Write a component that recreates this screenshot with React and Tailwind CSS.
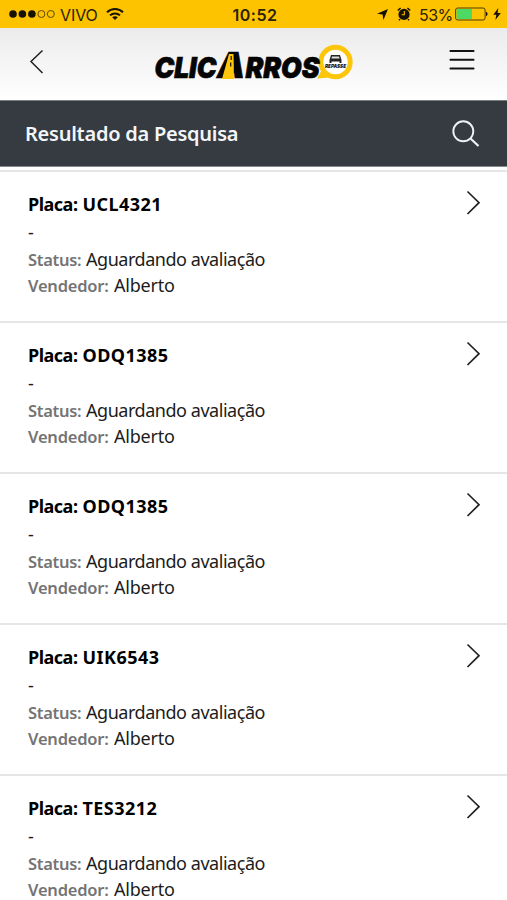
import React from 'react';

const vehicles = ['UCL4321', 'ODQ1385', 'ODQ1385', 'UIK6543', 'TES3212'];

function StatusBar() {
  return (
    <div className="flex h-7 shrink-0 items-center bg-[#fdc300] pr-[6px] pl-[9px] font-['Inter','Liberation_Sans',sans-serif] text-[#2b2205]">
      <div className="flex flex-1 items-center">
        <svg width="48" height="10" viewBox="0 0 48 10">
          <g fill="#171100">
            <circle cx="4" cy="5" r="3.8" />
            <circle cx="13.4" cy="5" r="3.8" />
            <circle cx="22.9" cy="5" r="3.8" />
          </g>
          <g fill="none" stroke="#4d3c04" strokeWidth="0.9">
            <circle cx="32.4" cy="5" r="3.5" />
            <circle cx="41.8" cy="5" r="3.5" />
          </g>
        </svg>
        <span className="ml-[3px] w-[39px] pt-px text-[16px] leading-7 tracking-[-0.1px] whitespace-nowrap">VIVO</span>
        <svg className="ml-[7px]" width="18" height="14" viewBox="0 0 18 14" fill="none" stroke="#171100" strokeWidth="2">
          <path d="M1 5.3C5.5.8 12.5.8 17 5.3" />
          <path d="M4 8.4c2.8-2.7 7.2-2.7 10 0" />
          <path d="M9 13 6.2 10.2c1.5-1.4 4.1-1.4 5.6 0Z" fill="#171100" stroke="none" />
        </svg>
      </div>
      <span className="pt-px text-[16px] leading-7 font-semibold tracking-[0.5px]">10:52</span>
      <div className="flex flex-1 items-center justify-end">
        <svg width="11" height="11" viewBox="0 0 11 11">
          <path d="M11 0 6.4 11 5.6 5.5 0 4.8Z" fill="#171100" />
        </svg>
        <svg className="ml-[9px]" width="14" height="14" viewBox="0 0 14 14">
          <circle cx="7" cy="7.4" r="5.6" fill="#171100" />
          <path d="M.8 3.5 3.6 1M13.2 3.5 10.4 1M3 12.2 2 13.3M11 12.2l1 1.1" stroke="#171100" strokeWidth="1.5" />
          <path d="M7.3 4v3.8H4.7" fill="none" stroke="#fdc300" strokeWidth="1.1" />
        </svg>
        <span className="ml-2 w-[33px] pt-px text-[16px] leading-7 tracking-[-0.6px] whitespace-nowrap">53%</span>
        <svg className="ml-[3px]" width="33" height="14" viewBox="0 0 33 14">
          <rect x=".6" y="1" width="29.5" height="12" rx="2" fill="none" stroke="#4d3c04" />
          <path d="M1.6 2h15.4v10H1.6Z" fill="#4cd964" />
          <path d="M31 4.8c2 .6 2 3.800 0 4.400Z" fill="#171100" />
        </svg>
        <svg className="ml-[5px]" width="8" height="12" viewBox="0 0 8 12">
          <path d="M5.300 0 .3 6.700h3L2.400 12 7.800 4.900H4.600Z" fill="#171100" />
        </svg>
      </div>
    </div>
  );
}

function Logo() {
  return (
    <svg width="204" height="58" viewBox="150 34 204 58" fontFamily="Inter, sans-serif" fontWeight="900" fontStyle="italic">
      <path d="m317 78.500 5-9 8 8Z" fill="#fdc60b" />
      <circle cx="335.500" cy="62" r="14.700" fill="#fff" stroke="#fdc60b" strokeWidth="5" />
      <g fill="#050505" stroke="#050505" strokeWidth=".7">
        <text x="154.500" y="78.300" fontSize="28.500" textLength="62" lengthAdjust="spacingAndGlyphs">CLIC</text>
        <text x="217" y="78.300" fontSize="35" textLength="28" lengthAdjust="spacingAndGlyphs">A</text>
        <text x="245.500" y="78.300" fontSize="28.500" textLength="74" lengthAdjust="spacingAndGlyphs">RROS</text>
      </g>
      <path d="M229 54h4.500l.5 25h-12Z" fill="#fdc60b" />
      <path d="M231.200 56v4M230.700 62.500v4" stroke="#111" strokeWidth="1.200" />
      <path d="m329.500 60 1.500-5h9l1.500 5v3h-2v-1.500h-8V63h-2Z" fill="#222" />
      <path d="M332 56.500h7l.6 2h-8.200Z" fill="#ddd" />
      <text x="325" y="67.500" fontSize="5" textLength="21" lengthAdjust="spacingAndGlyphs" fill="#111">REPASSE</text>
    </svg>
  );
}

function Header() {
  return (
    <header className="flex h-[72px] shrink-0 items-start justify-between bg-linear-to-b from-[#ebebeb] to-white pr-8 pl-[29px]">
      <svg className="mt-[21px]" width="16" height="25" viewBox="0 0 16 25" fill="none" stroke="#222" strokeWidth="1.500">
        <path d="M13.500 1.500 2 12.500l11.500 11.500" />
      </svg>
      <div className="mt-[6px] ml-[10px]"><Logo /></div>
      <svg className="mt-[21px]" width="26" height="22" viewBox="0 0 26 22" stroke="#111" strokeWidth="2.100" strokeLinecap="round">
        <path d="M1.500 2h23M1.500 10.700h23M1.500 19.500h23" />
      </svg>
    </header>
  );
}

function TitleBar() {
  return (
    <div className="flex h-[67px] shrink-0 items-center justify-between border-y border-t-[#77807f] border-b-[#858a8d] bg-[#353b41] pr-[27px] pl-[25px]">
      <h1 className="text-[20px] leading-7 font-semibold tracking-[-0.25px] text-[#f3f6f8]">Resultado da Pesquisa</h1>
      <svg width="28" height="28" viewBox="0 0 28 28" fill="none" stroke="#eef2f4" strokeWidth="1.900">
        <circle cx="11.300" cy="11.300" r="10" />
        <path d="m18.500 18.500 8 7.500" strokeWidth="2.200" />
      </svg>
    </div>
  );
}

function VehicleRow({ plate }) {
  return (
    <li className="flex h-[151px] shrink-0 items-start justify-between border-b-2 border-[#e5e6e6] pr-[26px] pl-7">
      <div className="pt-[19px] text-[18px] leading-[27px] whitespace-nowrap text-[#1c1c1c]">
        <p className="font-bold text-black">
          <span className="inline-block w-[54.5px] tracking-[-0.5px]">Placa:</span>
          <span className="tracking-[0.45px]">{plate}</span>
        </p>
        <p className="mt-px">-</p>
        <p>
          <span className="inline-block w-[58px] text-[16.5px] leading-[25px] font-semibold tracking-[-0.3px] text-[#747474]">Status:</span>
          <span className="tracking-[-0.46px]">Aguardando avaliação</span>
        </p>
        <p className="-mt-px">
          <span className="inline-block w-[86px] text-[16.5px] leading-[25px] font-semibold tracking-[-0.2px] text-[#747474]">Vendedor:</span>
          <span className="tracking-[-0.2px]">Alberto</span>
        </p>
      </div>
      <svg className="mt-[17px]" width="15" height="27" viewBox="0 0 15 27" fill="none" stroke="#222" strokeWidth="1.700">
        <path d="m1.500 2.500 11.500 11.200L1.500 25" />
      </svg>
    </li>
  );
}

export default function App() {
  return (
    <div className="flex h-[900px] w-[507px] flex-col overflow-hidden bg-white font-['Noto_Sans','Open_Sans',sans-serif]">
      <StatusBar />
      <Header />
      <TitleBar />
      <ul className="mt-[3px] flex flex-col border-t-2 border-[#e5e6e6]">
        {vehicles.map((plate, i) => <VehicleRow key={i} plate={plate} />)}
      </ul>
    </div>
  );
}
